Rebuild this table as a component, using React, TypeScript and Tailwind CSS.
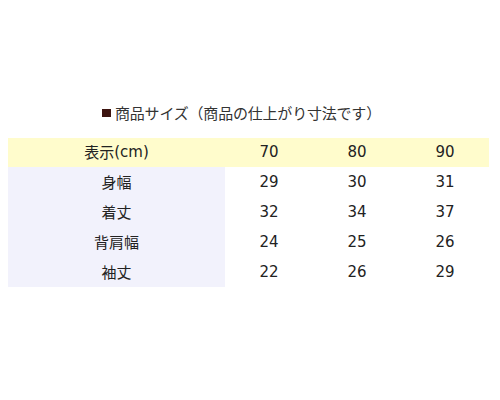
import React from "react";

const rows = [
  ["身幅", "29", "30", "31"],
  ["着丈", "32", "34", "37"],
  ["背肩幅", "24", "25", "26"],
  ["袖丈", "22", "26", "29"],
];

export default function App() {
  return (
    <div
      className="w-[500px] h-[400px] bg-white text-[#222]"
      style={{ fontFamily: '"DejaVu Sans", "Noto Sans CJK JP", sans-serif' }}
    >
      <div className="pt-[103px] pl-[102px] flex items-center h-[123px] text-[15px] text-[#333]">
        <span className="w-[9px] h-[8px] bg-[#3d1410] mr-[4px]" />
        <span style={{ fontFamily: '"Noto Sans CJK JP", sans-serif' }} className="tracking-[-0.2px]">
          商品サイズ（商品の仕上がり寸法です）
        </span>
      </div>
      <div className="mt-[15px] ml-[8px] grid grid-cols-[217px_88px_88px_88px] text-[15px]">
        <div className="h-[29px] bg-[#fffccc] flex items-center justify-center">
          <span style={{ fontFamily: '"Noto Sans CJK JP", sans-serif' }}>表示</span>(cm)
        </div>
        <div className="h-[29px] bg-[#fffccc] flex items-center justify-center">70</div>
        <div className="h-[29px] bg-[#fffccc] flex items-center justify-center">80</div>
        <div className="h-[29px] bg-[#fffccc] flex items-center justify-center">90</div>
        {rows.map((r) => (
          <React.Fragment key={r[0]}>
            <div
              className="h-[30px] bg-[#f2f2fc] flex items-center justify-center"
              style={{ fontFamily: '"Noto Sans CJK JP", sans-serif' }}
            >
              {r[0]}
            </div>
            <div className="h-[30px] flex items-center justify-center">{r[1]}</div>
            <div className="h-[30px] flex items-center justify-center">{r[2]}</div>
            <div className="h-[30px] flex items-center justify-center">{r[3]}</div>
          </React.Fragment>
        ))}
      </div>
    </div>
  );
}
